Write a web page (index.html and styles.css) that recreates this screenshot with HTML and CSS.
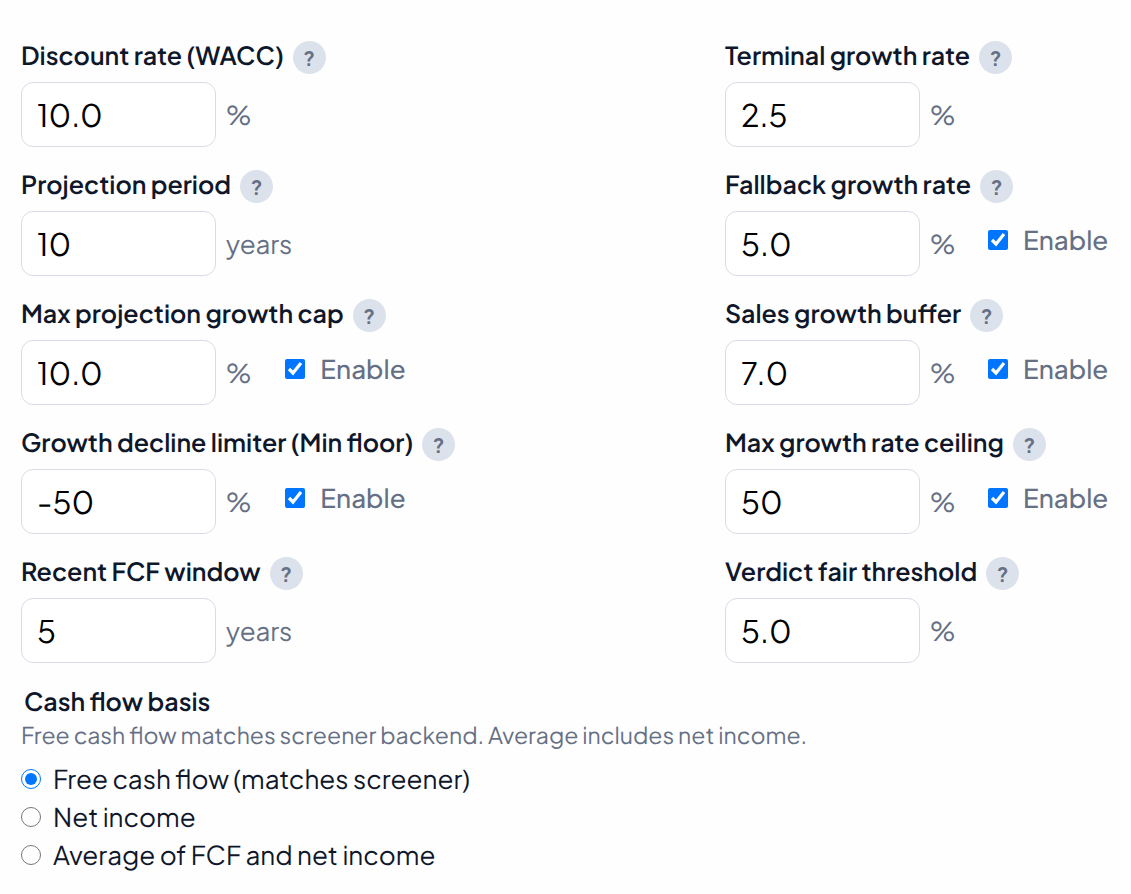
FILE: index.html
```html
<!DOCTYPE html>
<html lang="en">
<head>
  <meta charset="UTF-8" />
  <meta name="viewport" content="width=device-width, initial-scale=1.0" />
  <title>DCF Settings</title>
  <link rel="stylesheet" href="styles.css">
</head>
<body>

<form class="settings">
  <div class="settings-grid">

    <div class="field">
      <div class="field-head">
        <label for="wacc">Discount rate (WACC)</label>
        <button type="button" class="help" aria-label="About discount rate">?</button>
      </div>
      <div class="field-row">
        <input type="text" inputmode="decimal" id="wacc" value="10.0">
        <span class="unit">%</span>
      </div>
    </div>

    <div class="field">
      <div class="field-head">
        <label for="terminal">Terminal growth rate</label>
        <button type="button" class="help" aria-label="About terminal growth rate">?</button>
      </div>
      <div class="field-row">
        <input type="text" inputmode="decimal" id="terminal" value="2.5">
        <span class="unit">%</span>
      </div>
    </div>

    <div class="field">
      <div class="field-head">
        <label for="period">Projection period</label>
        <button type="button" class="help" aria-label="About projection period">?</button>
      </div>
      <div class="field-row">
        <input type="text" inputmode="numeric" id="period" value="10">
        <span class="unit">years</span>
      </div>
    </div>

    <div class="field">
      <div class="field-head">
        <label for="fallback">Fallback growth rate</label>
        <button type="button" class="help" aria-label="About fallback growth rate">?</button>
      </div>
      <div class="field-row">
        <input type="text" inputmode="decimal" id="fallback" value="5.0">
        <span class="unit">%</span>
        <label class="toggle"><input type="checkbox" checked> Enable</label>
      </div>
    </div>

    <div class="field">
      <div class="field-head">
        <label for="cap">Max projection growth cap</label>
        <button type="button" class="help" aria-label="About max projection growth cap">?</button>
      </div>
      <div class="field-row">
        <input type="text" inputmode="decimal" id="cap" value="10.0">
        <span class="unit">%</span>
        <label class="toggle"><input type="checkbox" checked> Enable</label>
      </div>
    </div>

    <div class="field">
      <div class="field-head">
        <label for="buffer">Sales growth buffer</label>
        <button type="button" class="help" aria-label="About sales growth buffer">?</button>
      </div>
      <div class="field-row">
        <input type="text" inputmode="decimal" id="buffer" value="7.0">
        <span class="unit">%</span>
        <label class="toggle"><input type="checkbox" checked> Enable</label>
      </div>
    </div>

    <div class="field">
      <div class="field-head">
        <label for="floor">Growth decline limiter (Min floor)</label>
        <button type="button" class="help" aria-label="About growth decline limiter">?</button>
      </div>
      <div class="field-row">
        <input type="text" inputmode="decimal" id="floor" value="-50">
        <span class="unit">%</span>
        <label class="toggle"><input type="checkbox" checked> Enable</label>
      </div>
    </div>

    <div class="field">
      <div class="field-head">
        <label for="ceiling">Max growth rate ceiling</label>
        <button type="button" class="help" aria-label="About max growth rate ceiling">?</button>
      </div>
      <div class="field-row">
        <input type="text" inputmode="decimal" id="ceiling" value="50">
        <span class="unit">%</span>
        <label class="toggle"><input type="checkbox" checked> Enable</label>
      </div>
    </div>

    <div class="field">
      <div class="field-head">
        <label for="window">Recent FCF window</label>
        <button type="button" class="help" aria-label="About recent FCF window">?</button>
      </div>
      <div class="field-row">
        <input type="text" inputmode="numeric" id="window" value="5">
        <span class="unit">years</span>
      </div>
    </div>

    <div class="field">
      <div class="field-head">
        <label for="threshold">Verdict fair threshold</label>
        <button type="button" class="help" aria-label="About verdict fair threshold">?</button>
      </div>
      <div class="field-row">
        <input type="text" inputmode="decimal" id="threshold" value="5.0">
        <span class="unit">%</span>
      </div>
    </div>

  </div>

  <fieldset class="basis">
    <legend>Cash flow basis</legend>
    <p class="hint">Free cash flow matches screener backend. Average includes net income.</p>
    <label class="option"><input type="radio" name="basis" value="fcf" checked> Free cash flow (matches screener)</label>
    <label class="option"><input type="radio" name="basis" value="net"> Net income</label>
    <label class="option"><input type="radio" name="basis" value="avg"> Average of FCF and net income</label>
  </fieldset>
</form>

</body>
</html>
```
FILE: styles.css
```css
* {
  box-sizing: border-box;
}

body {
  font-family: "Plus Jakarta Sans", Inter, sans-serif;
  margin: 0;
  background: #fefefe;
  color: #0f172a;
  font-size: 26px;
  line-height: 30px;
  text-rendering: geometricPrecision;
}

.settings {
  padding: 41px 23px 10px 21px;
}

.settings-grid {
  display: grid;
  grid-template-columns: auto 383px;
  justify-content: space-between;
  row-gap: 23px;
}

.field-head {
  display: flex;
  align-items: flex-start;
  gap: 9px;
  margin-bottom: 8px;
  font-size: 25px;
  font-weight: 600;
  line-height: 28px;
  white-space: nowrap;
}

.help {
  width: 33px;
  height: 33px;
  padding: 0;
  border: none;
  border-radius: 50%;
  background: #dce2eb;
  color: #667085;
  font-family: inherit;
  font-size: 20px;
  font-weight: 700;
  line-height: 33px;
  cursor: pointer;
}

.field-row {
  display: flex;
  align-items: center;
}

.field-row input[type="text"] {
  width: 195px;
  height: 65px;
  padding: 0 15px;
  border: 1px solid #d9dce8;
  border-radius: 12px;
  background: #fff;
  color: #000;
  font-family: inherit;
  font-size: 31px;
  text-rendering: inherit;
}

.unit {
  margin-left: 10px;
  min-width: 24px;
  color: #667085;
}

.toggle {
  display: flex;
  align-items: center;
  gap: 15px;
  margin: 0 0 8px 34px;
  color: #667085;
  font-weight: 500;
}

input[type="checkbox"],
input[type="radio"] {
  width: 20px;
  height: 20px;
  margin: 0;
  flex-shrink: 0;
}

.basis {
  margin: 23px 0 0;
  padding: 0;
  border: none;
}

.basis legend {
  padding: 0 3px;
  font-size: 25px;
  font-weight: 600;
}

.hint {
  margin: 5px 0 13px;
  color: #667085;
  font-size: 23px;
}

.option {
  display: flex;
  align-items: center;
  gap: 12px;
  margin-bottom: 8px;
}
```
